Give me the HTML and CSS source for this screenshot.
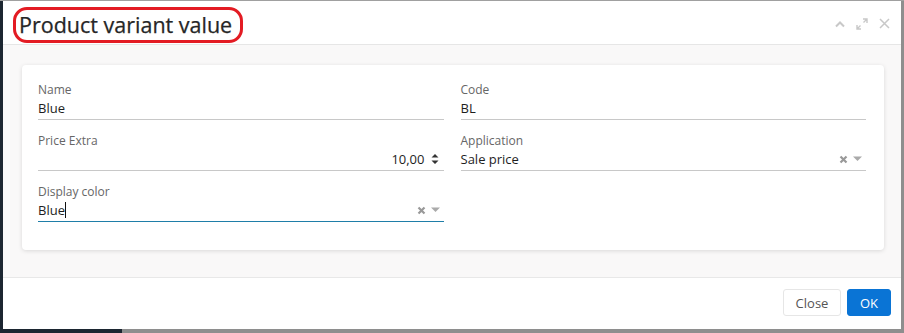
FILE: index.html
```html
<!DOCTYPE html>
<html>
<head>
<meta charset="utf-8">
<link rel="stylesheet" href="styles.css">
</head>
<body>
<div class="dialog">
  <div class="header">
    <h1 class="title">Product variant value</h1>
    <div class="win-tools">
      <svg width="10" height="8" viewBox="0 0 10 8"><path d="M1 6.5 L5 2.5 L9 6.5" fill="none" stroke="#c8c8c8" stroke-width="2"/></svg>
      <svg width="12" height="12" viewBox="0 0 12 12"><path d="M7 1h4v4M11 1L7.5 4.5M5 11H1V7M1 11l3.5-3.5" fill="none" stroke="#c8c8c8" stroke-width="1.4"/></svg>
      <svg width="11" height="11" viewBox="0 0 11 11"><path d="M1 1L10 10M10 1L1 10" fill="none" stroke="#c8c8c8" stroke-width="1.5"/></svg>
    </div>
  </div>
  <div class="body">
    <div class="card">
      <div class="grid">
        <div class="field">
          <div class="label">Name</div>
          <div class="input"><span class="val">Blue</span></div>
        </div>
        <div class="field">
          <div class="label">Code</div>
          <div class="input"><span class="val">BL</span></div>
        </div>
        <div class="field">
          <div class="label">Price Extra</div>
          <div class="input num"><span class="val">10,00</span>
            <svg class="spin" width="8" height="12" viewBox="0 0 8 12"><path d="M0.5 4.5L4 1L7.5 4.5Z M0.5 7.5L4 11L7.5 7.5Z" fill="#333"/></svg>
          </div>
        </div>
        <div class="field">
          <div class="label">Application</div>
          <div class="input"><span class="val">Sale price</span>
            <span class="sel-icons">
              <svg width="9" height="9" viewBox="0 0 9 9"><path d="M1.5 1.5L7.5 7.5M7.5 1.5L1.5 7.5" stroke="#999" stroke-width="2.2"/></svg>
              <svg width="9" height="6" viewBox="0 0 9 6"><path d="M0 0.5H9L4.5 5Z" fill="#aaa"/></svg>
            </span>
          </div>
        </div>
        <div class="field">
          <div class="label">Display color</div>
          <div class="input focus"><span class="val">Blue</span><span class="caret"></span>
            <span class="sel-icons">
              <svg width="9" height="9" viewBox="0 0 9 9"><path d="M1.5 1.5L7.5 7.5M7.5 1.5L1.5 7.5" stroke="#999" stroke-width="2.2"/></svg>
              <svg width="9" height="6" viewBox="0 0 9 6"><path d="M0 0.5H9L4.5 5Z" fill="#aaa"/></svg>
            </span>
          </div>
        </div>
      </div>
    </div>
  </div>
  <div class="footer">
    <button class="btn btn-close">Close</button>
    <button class="btn btn-ok">OK</button>
  </div>
</div>
</body>
</html>
```

FILE: styles.css
```css
html, body {
  margin: 0;
  padding: 0;
}
body {
  width: 904px;
  height: 333px;
  overflow: hidden;
  background: linear-gradient(to right, #1c2631 122px, #8e8e8e 122px);
  font-family: "Open Sans", "Liberation Sans", sans-serif;
  box-sizing: border-box;
  border-top: 1px solid #a0a0a0;
}
.dialog {
  margin: 0 3px 0 3px;
  height: 328px;
  background: #fff;
  display: flex;
  flex-direction: column;
}
.header {
  height: 44px;
  border-bottom: 1px solid #e6e6e6;
  display: flex;
  align-items: center;
  justify-content: space-between;
  padding: 0 11px 0 10px;
  box-sizing: border-box;
  flex: none;
}
.title {
  margin: 4px 0 0 0;
  font-size: 21.5px;
  font-weight: 400;
  color: #262626;
  line-height: 30px;
  height: 36px;
  box-sizing: border-box;
  padding: 0 8px 0 3px;
  border: 3px solid #e31b23;
  border-radius: 14px;
  display: flex;
  align-items: center;
  -webkit-text-stroke: 0.25px #262626;
}
.win-tools {
  display: flex;
  align-items: center;
  gap: 11px;
  margin-top: 2px;
}
.body {
  flex: 1;
  background: #f9f8f8;
  padding: 20px 17px 26px 19px;
  border-bottom: 1px solid #e8e8e8;
}
.card {
  background: #fff;
  border-radius: 4px;
  box-shadow: 0 1px 4px rgba(0,0,0,0.13);
  padding: 17px 18px 15px 16px;
}
.grid {
  display: grid;
  grid-template-columns: 1fr 1fr;
  column-gap: 17px;
}
.field {
  margin-bottom: 13px;
}
.label {
  font-size: 12px;
  line-height: 15px;
  color: #666;
}
.input {
  height: 23px;
  border-bottom: 1px solid #c8c8c8;
  display: flex;
  align-items: center;
  font-size: 13px;
  color: #1e1e1e;
  line-height: 18px;
  box-sizing: border-box;
}
.input.num {
  justify-content: flex-end;
}
.input.num .spin {
  margin: 0 5px 0 6px;
}
.input.focus {
  border-bottom-color: #1f7ea8;
}
.caret {
  display: inline-block;
  width: 1px;
  height: 16px;
  background: #111;
}
.sel-icons {
  margin-left: auto;
  margin-right: 4px;
  display: flex;
  align-items: center;
  gap: 5px;
}
.footer {
  flex: none;
  height: 51px;
  display: flex;
  align-items: center;
  justify-content: flex-end;
  gap: 6px;
  padding: 0 10px 2px 0;
  box-sizing: border-box;
}
.btn {
  font-family: "Open Sans", "Liberation Sans", sans-serif;
  font-size: 13px;
  height: 27px;
  border-radius: 3px;
  padding: 0;
  cursor: pointer;
}
.btn-close {
  width: 58px;
  background: #fff;
  border: 1px solid #e6e6e6;
  color: #555;
}
.btn-ok {
  width: 44px;
  background: #0a74d5;
  border: 1px solid #0a74d5;
  color: #fff;
}
```
